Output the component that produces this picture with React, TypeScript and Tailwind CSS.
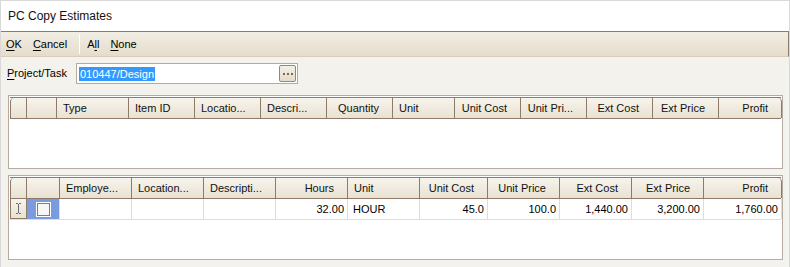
import React from "react";

type Col = { label: string; w: number; align: "left" | "right" };

const grid1Cols: Col[] = [
  { label: "Type", w: 72, align: "left" },
  { label: "Item ID", w: 66, align: "left" },
  { label: "Locatio...", w: 66, align: "left" },
  { label: "Descri...", w: 66, align: "left" },
  { label: "Quantity", w: 66, align: "right" },
  { label: "Unit", w: 62, align: "left" },
  { label: "Unit Cost", w: 66, align: "right" },
  { label: "Unit Pri...", w: 66, align: "right" },
  { label: "Ext Cost", w: 66, align: "right" },
  { label: "Ext Price", w: 66, align: "right" },
  { label: "Profit", w: 63, align: "right" },
];

const grid2Cols: Col[] = [
  { label: "Employe...", w: 72, align: "left" },
  { label: "Location...", w: 72, align: "left" },
  { label: "Descripti...", w: 72, align: "left" },
  { label: "Hours", w: 72, align: "right" },
  { label: "Unit", w: 72, align: "left" },
  { label: "Unit Cost", w: 68, align: "right" },
  { label: "Unit Price", w: 72, align: "right" },
  { label: "Ext Cost", w: 72, align: "right" },
  { label: "Ext Price", w: 72, align: "right" },
  { label: "Profit", w: 78, align: "right" },
];

const row2 = ["", "", "", "32.00", "HOUR", "45.0", "100.0", "1,440.00", "3,200.00", "1,760.00"];

const headBg = "bg-gradient-to-b from-[#f7f4ec] to-[#e9e2d3]";

function HeaderRow({ cols, selW }: { cols: Col[]; selW: number }) {
  return (
    <div className="flex h-[22px] border-t border-b border-[#8f7a6a]">
      <div className={`w-[17px] shrink-0 border-l border-r border-[#8f7a6a] rounded-tl-[4px] ${headBg}`} />
      <div className={`shrink-0 border-r border-[#8f7a6a] ${headBg}`} style={{ width: selW }} />
      {cols.map((c, i) => (
        <div
          key={c.label}
          className={`shrink-0 border-r border-[#8f7a6a] flex items-center ${headBg} ${
            c.align === "right" ? "justify-end pr-[13px]" : "pl-[6px]"
          } ${i === cols.length - 1 ? "rounded-tr-[4px]" : ""}`}
          style={{ width: c.w }}
        >
          <span className="whitespace-nowrap text-[#111]">{c.label}</span>
        </div>
      ))}
    </div>
  );
}

export default function App() {
  return (
    <div className="w-[790px] h-[267px] flex flex-col border-t border-l border-r border-[#d9d9d9] bg-[#f4f2ec] overflow-hidden font-['Liberation_Sans',Arial,sans-serif] text-[11px] text-black">
      {/* Title */}
      <div className="h-[30px] bg-white flex items-center pl-[7px]">
        <span className="text-[12px] text-[#111]">PC Copy Estimates</span>
      </div>

      {/* Toolbar */}
      <div className="h-[26px] border-t border-b border-t-[#8d7b6d] border-b-[#d9cdb9] border-r border-r-[#8d7b6d] bg-gradient-to-b from-[#f2eee4] to-[#e5ddcc] flex items-center pl-[5px]">
        <span>
          <u className="underline-offset-2">O</u>K
        </span>
        <span className="ml-[11px]">
          <u className="underline-offset-2">C</u>ancel
        </span>
        <span className="ml-[12px] w-px h-[20px] bg-[#c9bfae] border-r border-white" />
        <span className="ml-[7px]">
          A<u className="underline-offset-2">l</u>l
        </span>
        <span className="ml-[11px]">
          <u className="underline-offset-2">N</u>one
        </span>
      </div>

      {/* Body */}
      <div className="flex-1 flex flex-col">
        <div className="mt-[6px] h-[21px] flex items-center pl-[6px]">
          <span className="w-[69px]">
            <u className="underline-offset-2">P</u>roject/Task
          </span>
          <div className="w-[222px] h-[21px] border border-[#b3aaa0] bg-white flex items-center pl-[2px] pr-px">
            <span className="bg-[#3399ff] text-white px-px leading-[14px]">010447/Design</span>
            <div className="ml-auto w-[17px] h-[17px] rounded-[2px] border border-[#9a8574] bg-gradient-to-b from-[#f4f0e6] to-[#e4dccb] flex items-center justify-center gap-[2px]">
              <span className="w-[2px] h-[2px] bg-[#7a6656]" />
              <span className="w-[2px] h-[2px] bg-[#7a6656]" />
              <span className="w-[2px] h-[2px] bg-[#7a6656]" />
            </div>
          </div>
        </div>

        {/* Grid 1 */}
        <div className="mt-[11px] ml-[7px] w-[775px] h-[74px] border border-[#b5aba0] bg-white p-px">
          <HeaderRow cols={grid1Cols} selW={30} />
        </div>

        {/* Grid 2 */}
        <div className="mt-[6px] ml-[7px] w-[775px] h-[85px] border border-[#b5aba0] bg-white p-px">
          <HeaderRow cols={grid2Cols} selW={33} />
          <div className="flex h-[21px] border-b border-[#e2ddd2]">
            <div className={`w-[17px] shrink-0 border-l border-r border-b border-[#8f7a6a] flex items-center justify-center ${headBg}`}>
              <svg width="7" height="11" viewBox="0 0 7 11">
                <path d="M1 0.5h2M4 0.5h2M3.5 1v9M1 10.5h2M4 10.5h2" stroke="#6b6b6b" strokeWidth="1" fill="none" />
              </svg>
            </div>
            <div className="w-[33px] shrink-0 bg-[#7b9be0] border-r border-[#e2ddd2] flex items-center justify-center">
              <div className="w-[15px] h-[15px] border border-white flex">
                <div className="flex-1 border border-[#7e7e7e] bg-[#f7f7f7]" />
              </div>
            </div>
            {grid2Cols.map((c, i) => (
              <div
                key={c.label}
                className={`shrink-0 border-r border-[#e2ddd2] flex items-center ${
                  c.align === "right" ? "justify-end pr-[3px]" : "pl-[5px]"
                }`}
                style={{ width: c.w }}
              >
                <span className="whitespace-nowrap">{row2[i]}</span>
              </div>
            ))}
          </div>
        </div>
      </div>
    </div>
  );
}
